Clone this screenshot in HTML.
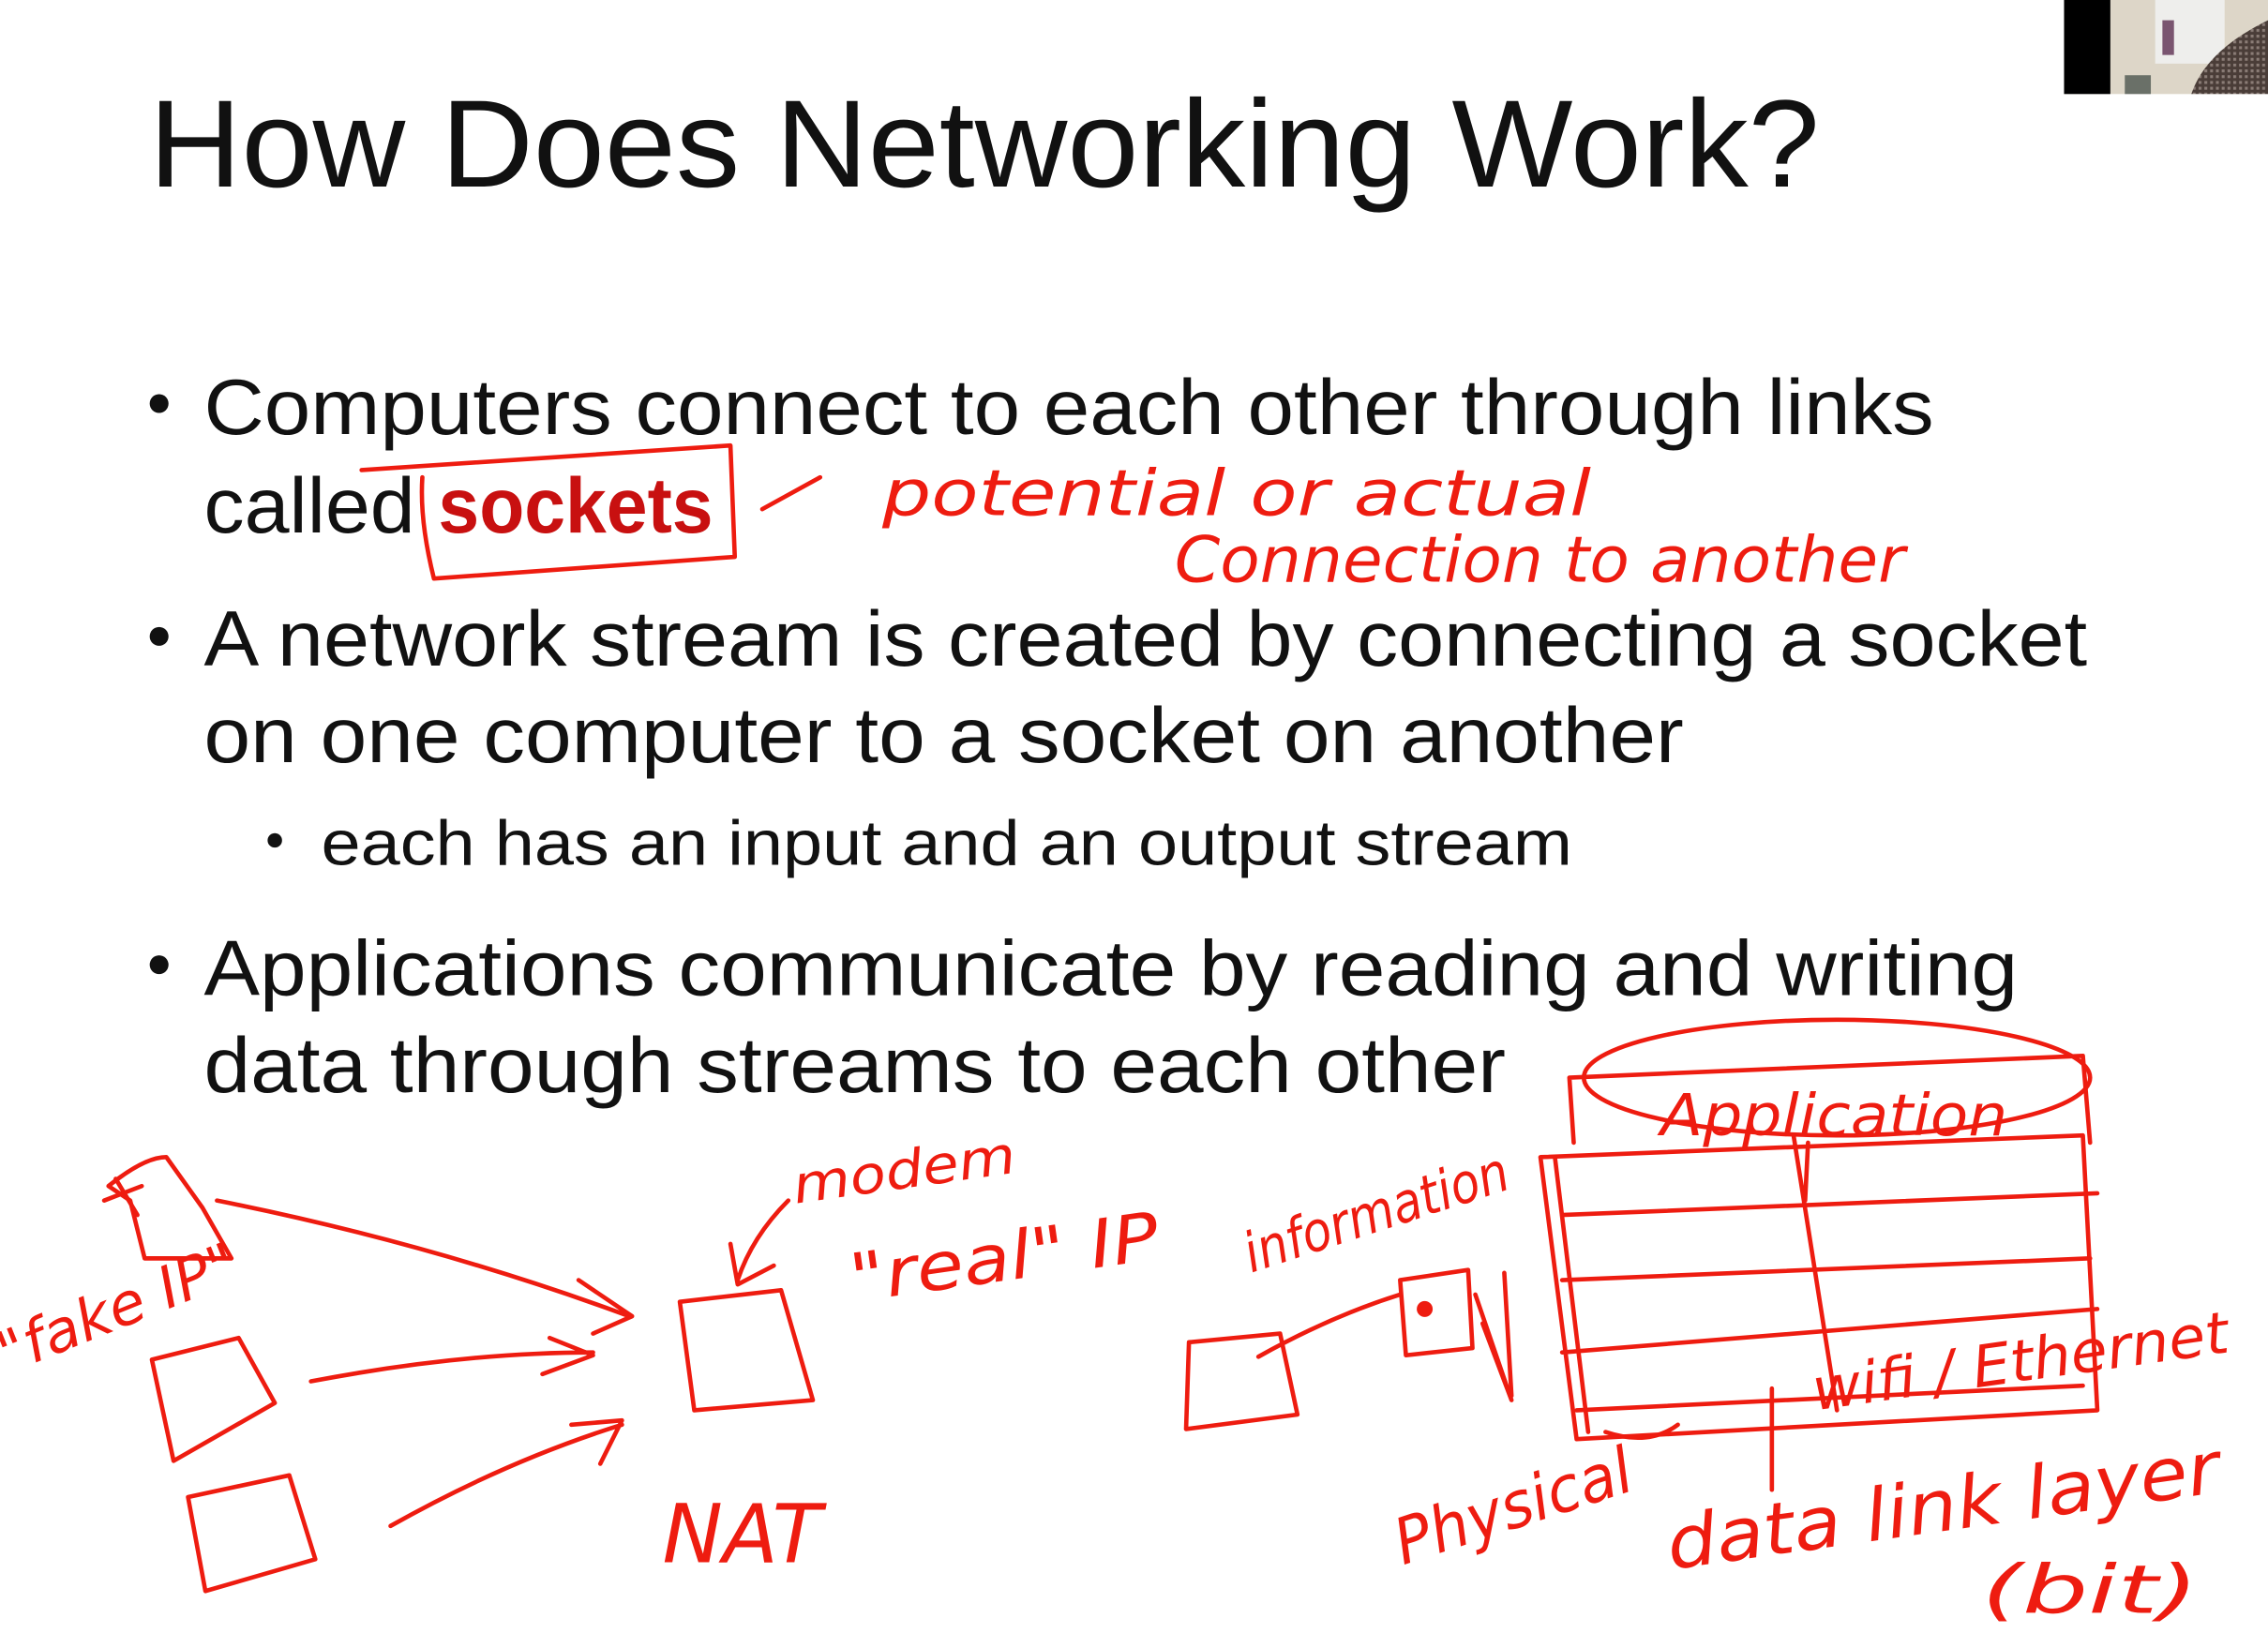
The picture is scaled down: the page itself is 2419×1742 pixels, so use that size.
<!DOCTYPE html>
<html><head><meta charset="utf-8"><style>
html,body{margin:0;padding:0;background:#fff;overflow:hidden}
svg{display:block}
</style></head><body>
<svg width="2419" height="1742" viewBox="0 0 1568 1129" preserveAspectRatio="none" xmlns="http://www.w3.org/2000/svg">
<defs>
<pattern id="chk" width="4" height="4" patternUnits="userSpaceOnUse"><rect width="4" height="4" fill="#4a3d38"/><rect width="2" height="2" fill="#8a7c76"/></pattern>
</defs>
<rect width="1568" height="1129" fill="#fff"/>
<rect x="1427" y="0" width="141" height="65" fill="#ddd6c8"/>
<rect x="1427" y="0" width="32" height="65" fill="#000"/>
<rect x="1490" y="0" width="48" height="44" fill="#eeeeec"/>
<rect x="1495" y="14" width="8" height="24" fill="#7a5570"/>
<path d="M1515 65 Q1525 35 1568 14 L1568 65 Z" fill="url(#chk)"/>
<rect x="1469" y="52" width="18" height="13" fill="#6a7068"/>
<g font-family="Liberation Sans, sans-serif" fill="#111">
<text x="103" y="129" font-size="86" textLength="1155" lengthAdjust="spacingAndGlyphs">How Does Networking Work?</text>
<circle cx="110" cy="279" r="6.5"/>
<text x="141" y="300" font-size="54" textLength="1196" lengthAdjust="spacingAndGlyphs">Computers connect to each other through links</text>
<text x="141" y="368" font-size="54" textLength="146" lengthAdjust="spacingAndGlyphs">called</text>
<text x="303" y="368" font-size="54" font-weight="bold" fill="#c81010" textLength="190" lengthAdjust="spacingAndGlyphs">sockets</text>
<circle cx="110" cy="440" r="6.5"/>
<text x="141" y="460" font-size="54" textLength="1302" lengthAdjust="spacingAndGlyphs">A network stream is created by connecting a socket</text>
<text x="141" y="527" font-size="54" textLength="1023" lengthAdjust="spacingAndGlyphs">on one computer to a socket on another</text>
<circle cx="190" cy="581" r="5"/>
<text x="222" y="598" font-size="44" textLength="865" lengthAdjust="spacingAndGlyphs">each has an input and an output stream</text>
<circle cx="110" cy="667" r="6.5"/>
<text x="141" y="688" font-size="54" textLength="1254" lengthAdjust="spacingAndGlyphs">Applications communicate by reading and writing</text>
<text x="141" y="755" font-size="54" textLength="900" lengthAdjust="spacingAndGlyphs">data through streams to each other</text>
</g>
<g fill="none" stroke="#ee1c10" stroke-width="3" stroke-linecap="round" stroke-linejoin="round">
<path d="M250 325 L505 308 L508 385 L300 400 Q290 360 292 330"/>
<path d="M527 352 L567 330"/>
<path d="M75 820 Q100 800 115 800 L140 835 L160 870 L100 870 L90 830 Z"/>
<path d="M80 815 L95 840 M72 830 L98 820"/>
<path d="M150 830 Q300 860 435 910 M400 885 L437 910 L410 922"/>
<path d="M105 940 L165 925 L190 970 L120 1010 Z"/>
<path d="M215 955 Q320 935 410 935 M380 925 L410 937 L375 950"/>
<path d="M130 1035 L200 1020 L218 1078 L142 1100 Z"/>
<path d="M270 1055 Q350 1010 430 985 M395 985 L430 982 L415 1012"/>
<path d="M470 900 L540 892 L562 968 L480 975 Z"/>
<path d="M545 830 Q520 855 510 885 M505 860 L510 888 L535 875"/>
<path d="M822 928 L885 922 L897 978 L820 988 Z"/>
<path d="M870 938 Q920 910 968 895"/>
<path d="M968 885 L1015 878 L1018 932 L972 937 Z"/>
<circle cx="985" cy="905" r="4" fill="#ee1c10"/>
<path d="M1020 895 L1045 968 L1025 915"/>
<path d="M1040 880 L1045 965"/>
<ellipse cx="1270" cy="745" rx="175" ry="40"/>
<path d="M1085 745 L1440 730 L1445 790 M1085 745 L1088 790"/>
<path d="M1065 800 L1440 785 L1450 975 L1090 995 Z"/>
<path d="M1080 840 L1450 825 M1080 885 L1445 870 M1080 935 L1450 905 M1090 975 L1440 958"/>
<path d="M1075 800 L1098 990 M1240 785 L1270 975 M1250 790 L1248 830"/>
<path d="M1225 960 L1225 1030"/>
<path d="M1110 990 Q1140 1000 1160 985"/>
</g>
<g font-family="DejaVu Sans, sans-serif" font-style="italic" fill="#ee1c10">
<text x="610" y="356" font-size="44" textLength="490" lengthAdjust="spacingAndGlyphs">potential or actual</text>
<text x="812" y="402" font-size="44" textLength="505" lengthAdjust="spacingAndGlyphs">Connection to another</text>
<text x="550" y="832" font-size="36" textLength="155" lengthAdjust="spacingAndGlyphs" transform="rotate(-8 550 832)">modem</text>
<text x="590" y="900" font-size="46" textLength="215" lengthAdjust="spacingAndGlyphs" transform="rotate(-8 590 900)">"real" IP</text>
<text x="5" y="950" font-size="40" textLength="175" lengthAdjust="spacingAndGlyphs" transform="rotate(-22 5 950)">"fake IP"</text>
<text x="458" y="1080" font-size="56" textLength="110" lengthAdjust="spacingAndGlyphs">NAT</text>
<text x="865" y="880" font-size="38" textLength="190" lengthAdjust="spacingAndGlyphs" transform="rotate(-18 865 880)">information</text>
<text x="1148" y="785" font-size="40" textLength="240" lengthAdjust="spacingAndGlyphs">Application</text>
<text x="1255" y="975" font-size="40" textLength="290" lengthAdjust="spacingAndGlyphs" transform="rotate(-8 1255 975)">wifi / Ethernet</text>
<text x="970" y="1082" font-size="44" textLength="170" lengthAdjust="spacingAndGlyphs" transform="rotate(-18 970 1082)">Physical</text>
<text x="1155" y="1085" font-size="50" textLength="385" lengthAdjust="spacingAndGlyphs" transform="rotate(-8 1155 1085)">data link layer</text>
<text x="1370" y="1115" font-size="46" textLength="150" lengthAdjust="spacingAndGlyphs">(bit)</text>
</g>
</svg>
</body></html>
